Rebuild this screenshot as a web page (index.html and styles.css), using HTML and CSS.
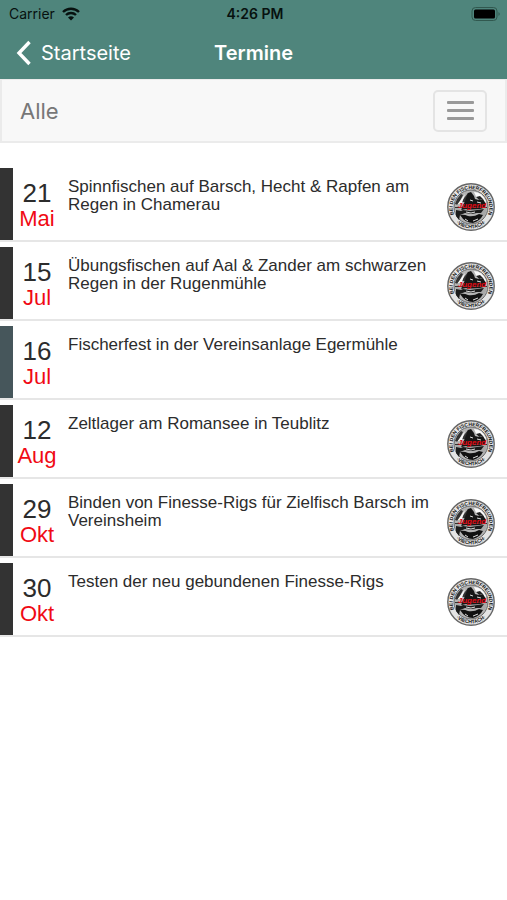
FILE: index.html
```html
<!DOCTYPE html>
<html lang="de">
<head>
<meta charset="utf-8">
<meta name="viewport" content="width=device-width, initial-scale=1">
<title>Termine</title>
<link rel="stylesheet" href="styles.css">
</head>
<body>
<svg class="sprite" aria-hidden="true">
  <defs>
    <path id="ring-top" d="M7.200 31.500A18.300 18.300 0 1 1 40.800 31.500"/>
    <path id="ring-bottom" d="M4 32A21.600 21.600 0 0 0 44 32"/>
  </defs>
  <symbol id="club-badge" viewBox="0 0 48 48">
    <circle cx="24" cy="24" r="23.200" fill="#e4e4e4" stroke="#666" stroke-width="1.400"/>
    <text class="ring-text"><textPath href="#ring-top" startOffset="50%">BEI DEN FISCHERFREUNDEN</textPath></text>
    <text class="ring-text"><textPath href="#ring-bottom" startOffset="50%">·VIECHTACH·</textPath></text>
    <circle cx="24" cy="24" r="17" fill="#b4b4b4" stroke="#666" stroke-width="1"/>
    <path d="M27 9q8 0 12 9l-1 3-8-5z" fill="#fafafa"/>
    <path d="M8 21q2-6 6-10l2 1-5 10zM14 19l7-9 2 9z" fill="#333"/>
    <path d="M10 22 18 11l-3 9z" fill="#fafafa"/>
    <path d="M18 18l3-8 3-1 3 4 1 3 4 1 4-1 3 5-2 5-23 1z" fill="#161616"/>
    <path d="M29 14l4-1 3 3-4 1z" fill="#222"/>
    <path d="M8 24l7 3 4-1 7 2 14-4q0 5-3 9l-7-4-9 1-10 2-2-4z" fill="#a8a8a8"/>
    <path d="M9 27l5 1 2-1 7 1 7-1 7-1-3 4-4 0-5 1-7-1-5 2-1 5-3-4z" fill="#1b1b1b"/>
    <path d="M13 32q4-1 8 1 6 1 11-2l4 1q-3 6-10 8-8 0-13-8z" fill="#111"/>
    <path d="M19 29l5 1 4-1M18 36l3 2M26 38l5-2M23 17l3 1M30 19l4 1" fill="none" stroke="#ddd"/>
    <path d="M8 24.500h32" stroke="#333" stroke-width="1"/>
    <text class="badge-name" x="25" y="25">Jugend</text>
  </symbol>
</svg>

<header class="app-header">
  <div class="status-bar">
    <div class="carrier">
      <span>Carrier</span>
      <svg class="wifi" viewBox="0 0 18 14" aria-hidden="true">
        <path d="M1 5a11.500 11.500 0 0 1 16 0M4 8a7.200 7.200 0 0 1 10 0" fill="none" stroke="#07110f" stroke-width="2.400"/>
        <path d="M6 10.500a4.500 4.500 0 0 1 6 0L9 13.500z" fill="#07110f"/>
      </svg>
    </div>
    <time class="clock">4:26 PM</time>
    <svg class="battery" viewBox="0 0 30 14" aria-hidden="true">
      <rect x="1" y=".5" width="25" height="13" rx="3.500" fill="none" stroke="#31584f"/>
      <rect x="3" y="2.500" width="21" height="9" rx="1.500" fill="#000"/>
      <path d="M27.500 5q2.500 2 0 4z" fill="#31584f"/>
    </svg>
  </div>
  <nav class="title-bar">
    <a class="back" href="#">
      <svg class="chevron" viewBox="0 0 16 26" aria-hidden="true"><path d="M13.500 2 3 13l10.500 11" fill="none" stroke="#fff" stroke-width="3.400"/></svg>
      <span>Startseite</span>
    </a>
    <h1>Termine</h1>
  </nav>
</header>

<div class="filter-bar">
  <a class="filter" href="#">Alle</a>
  <button class="menu" type="button" aria-label="Navigation">
    <span></span><span></span><span></span>
  </button>
</div>

<main class="events">
  <article class="event">
    <div class="date"><span>21</span><span class="month">Mai</span></div>
    <h2>Spinnfischen auf Barsch, Hecht &amp; Rapfen am Regen in Chamerau</h2>
    <svg class="badge" aria-hidden="true"><use href="#club-badge"/></svg>
  </article>
  <article class="event">
    <div class="date"><span>15</span><span class="month">Jul</span></div>
    <h2>Übungsfischen auf Aal &amp; Zander am schwarzen Regen in der Rugenmühle</h2>
    <svg class="badge" aria-hidden="true"><use href="#club-badge"/></svg>
  </article>
  <article class="event event-club">
    <div class="date"><span>16</span><span class="month">Jul</span></div>
    <h2>Fischerfest in der Vereinsanlage Egermühle</h2>
  </article>
  <article class="event">
    <div class="date"><span>12</span><span class="month">Aug</span></div>
    <h2>Zeltlager am Romansee in Teublitz</h2>
    <svg class="badge" aria-hidden="true"><use href="#club-badge"/></svg>
  </article>
  <article class="event">
    <div class="date"><span>29</span><span class="month">Okt</span></div>
    <h2>Binden von Finesse-Rigs für Zielfisch Barsch im Vereinsheim</h2>
    <svg class="badge" aria-hidden="true"><use href="#club-badge"/></svg>
  </article>
  <article class="event">
    <div class="date"><span>30</span><span class="month">Okt</span></div>
    <h2>Testen der neu gebundenen Finesse-Rigs</h2>
    <svg class="badge" aria-hidden="true"><use href="#club-badge"/></svg>
  </article>
</main>
</body>
</html>
```

FILE: styles.css
```css
* {
  box-sizing: border-box;
}

body {
  margin: 0;
  background: #fff;
  color: #2c2c2c;
  font-family: "Liberation Sans", Arial, sans-serif;
}

.sprite {
  display: none;
}

.ring-text {
  fill: #111;
  font-size: 5px;
  font-weight: 700;
  text-anchor: middle;
}

.badge-name {
  fill: #e30a14;
  font-size: 8px;
  font-style: italic;
  font-weight: 700;
  text-anchor: middle;
}

.app-header {
  background: #4f857c;
  font-family: Inter, "Liberation Sans", sans-serif;
}

.status-bar,
.title-bar {
  display: grid;
  grid-template-columns: 1fr auto 1fr;
  align-items: center;
}

.status-bar {
  height: 27px;
  padding: 0 6px 0 9px;
  color: #07110f;
  font-size: 14px;
}

.carrier {
  display: flex;
  align-items: center;
  gap: 7px;
}

.wifi {
  width: 18px;
  height: 14px;
}

.clock {
  font-weight: 600;
}

.battery {
  justify-self: end;
  width: 30px;
  height: 14px;
}

.title-bar {
  height: 52px;
  padding: 0 16px;
  color: #fff;
  font-size: 20px;
}

.back {
  display: flex;
  align-items: center;
  gap: 9px;
  color: inherit;
  text-decoration: none;
}

.chevron {
  width: 16px;
  height: 26px;
}

.title-bar h1 {
  margin: 0;
  font-size: 20px;
  font-weight: 600;
}

.filter-bar {
  display: flex;
  align-items: center;
  justify-content: space-between;
  height: 64px;
  padding: 0 18px;
  border: 2px solid #ebebeb;
  border-top-width: 1px;
  background: #f8f8f8;
}

.filter {
  color: #777;
  font-family: Inter, "Liberation Sans", sans-serif;
  font-size: 22px;
  text-decoration: none;
}

.menu {
  display: flex;
  flex-direction: column;
  align-items: center;
  justify-content: center;
  gap: 5px;
  width: 54px;
  height: 42px;
  padding: 0;
  border: 2px solid #e4e4e4;
  border-radius: 5px;
  background: transparent;
}

.menu span {
  width: 27px;
  height: 3px;
  border-radius: 1px;
  background: #999;
}

.events {
  display: grid;
  gap: 5px;
  padding-top: 25px;
}

.event {
  display: grid;
  grid-template-columns: 48px 1fr 48px;
  column-gap: 7px;
  min-height: 74px;
  padding-right: 12px;
  border-bottom: 2px solid #e6e6e6;
  background: linear-gradient(#333, #333) left / 13px 100% no-repeat;
  padding-left: 13px;
}

.event-club {
  background-image: linear-gradient(#46565b, #46565b);
}

.date {
  display: flex;
  flex-direction: column;
  align-items: center;
  padding-top: 12px;
  font-size: 26px;
  line-height: 26px;
}

.month {
  color: #f00a14;
  font-size: 22px;
}

.event h2 {
  margin: 0;
  padding-top: 10px;
  font-size: 17px;
  font-weight: 400;
  line-height: 18px;
}

.badge {
  width: 48px;
  height: 48px;
  margin-top: 15px;
}
```
